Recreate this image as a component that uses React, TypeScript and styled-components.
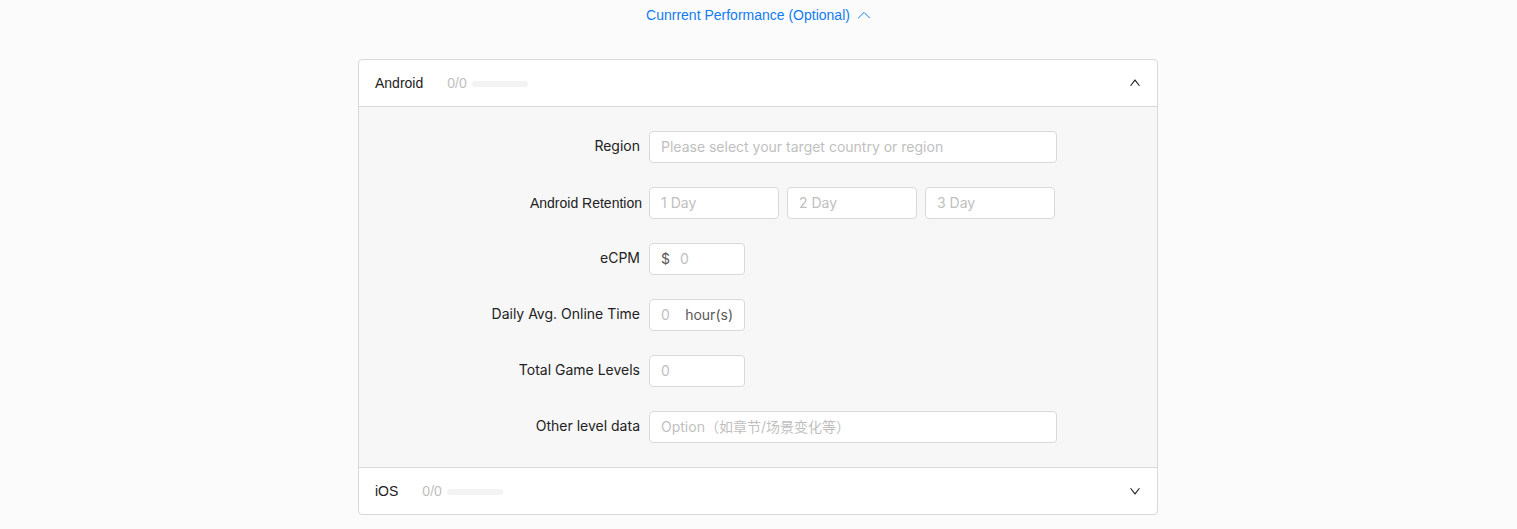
import { useState } from "react";
import styled, { createGlobalStyle } from "styled-components";

const GlobalStyle = createGlobalStyle`
  * {
    box-sizing: border-box;
  }

  body {
    margin: 0;
    background-color: #fbfbfb;
    color: #222;
    font-family: "Liberation Sans", Arial, "Noto Sans CJK SC", sans-serif;
    font-size: 14px;
    line-height: 22px;
  }
`;

const Container = styled.main`
  display: flex;
  flex-direction: column;
  align-items: center;
  gap: 33px;
  padding: 4px 17px 14px 16px;
`;

const SectionToggle = styled.button`
  display: flex;
  align-items: center;
  gap: 8px;
  padding: 0;
  border: none;
  background: none;
  color: #127bf2;
  font: inherit;
  cursor: pointer;
`;

const Collapse = styled.div`
  width: 100%;
  max-width: 800px;
  border: 1px solid #d9d9d9;
  border-radius: 4px;
  background-color: #fff;
  overflow: hidden;
`;

const Panel = styled.section`
  & + & {
    border-top: 1px solid #d9d9d9;
  }
`;

const PanelHeader = styled.button`
  display: flex;
  align-items: center;
  width: 100%;
  padding: 12px 16px;
  border: none;
  background: none;
  color: inherit;
  font: inherit;
  text-align: left;
  cursor: pointer;
`;

const Progress = styled.span`
  display: flex;
  align-items: center;
  gap: 5px;
  flex: 1;
  margin-left: 24px;
  color: #bfbfbf;
`;

const Track = styled.span`
  width: 56px;
  height: 6px;
  margin-top: 2px;
  border-radius: 3px;
  background-color: #f3f3f3;
`;

const Arrow = styled.svg<{ $open: boolean }>`
  flex: none;
  transform: rotate(${(props) => (props.$open ? "-90deg" : "90deg")});
`;

const Chevron = styled.svg<{ $open: boolean }>`
  flex: none;
  transform: ${(props) => (props.$open ? "none" : "rotate(180deg)")};
`;

const Form = styled.form`
  display: flex;
  flex-direction: column;
  gap: 24px;
  padding: 24px 16px;
  border-top: 1px solid #d9d9d9;
  background-color: #f7f7f7;
`;

const Row = styled.div<{ $tight?: boolean }>`
  display: grid;
  grid-template-columns: ${(props) => (props.$tight ? "267px" : "265px")} minmax(0, 408px);
  column-gap: ${(props) => (props.$tight ? "7px" : "9px")};
`;

const Label = styled.label<{ $plain?: boolean }>`
  line-height: ${(props) => (props.$plain ? "32px" : "30px")};
  text-align: right;
  font-family: ${(props) => (props.$plain ? "inherit" : `Inter, "Noto Sans CJK SC", sans-serif`)};
`;

const Days = styled.div`
  display: flex;
  gap: 8px;
`;

const Field = styled.span<{ $width?: string }>`
  display: flex;
  align-items: center;
  gap: 10px;
  width: ${(props) => props.$width || "100%"};
  height: 32px;
  padding: 0 11px;
  border: 1px solid #d9d9d9;
  border-radius: 4px;
  background-color: #fff;
  color: #595959;
  font-family: Inter, "Noto Sans CJK SC", sans-serif;
`;

const Input = styled.input`
  flex: 1;
  min-width: 0;
  width: 100%;
  padding: 0;
  border: none;
  outline: none;
  background: none;
  color: #262626;
  font: inherit;

  &::placeholder {
    color: #bfbfbf;
    opacity: 1;
  }
`;

function ArrowIcon({ open }: { open: boolean }) {
  return (
    <Arrow $open={open} width={12} height={12} viewBox="64 64 896 896" fill="currentColor" aria-hidden="true">
      <path d="M765.7 486.8L314.9 134.7A7.97 7.97 0 00302 141v77.3c0 4.9 2.3 9.6 6.1 12.6l360 281.1-360 281.1c-3.9 3-6.1 7.7-6.1 12.6V883c0 6.7 7.7 10.4 12.9 6.3l450.8-352.1a31.96 31.96 0 000-50.4z" />
    </Arrow>
  );
}

function ChevronIcon({ open }: { open: boolean }) {
  return (
    <Chevron $open={open} width={12} height={12} viewBox="0 0 12 12" fill="none" stroke="currentColor" aria-hidden="true">
      <path d="M0.4 9L6 3.4L11.6 9" strokeLinecap="round" strokeLinejoin="round" />
    </Chevron>
  );
}

function PerformanceForm({ platform }: { platform: string }) {
  const id = platform.toLowerCase();

  return (
    <Form>
      <Row>
        <Label htmlFor={`${id}-region`}>Region</Label>
        <Field>
          <Input id={`${id}-region`} placeholder="Please select your target country or region" />
        </Field>
      </Row>
      <Row $tight>
        <Label htmlFor={`${id}-day-1`} $plain>
          {platform} Retention
        </Label>
        <Days>
          {[1, 2, 3].map((day) => (
            <Field key={day} $width="130px">
              <Input id={`${id}-day-${day}`} aria-label={`Day ${day}`} placeholder={`${day} Day`} />
            </Field>
          ))}
        </Days>
      </Row>
      <Row>
        <Label htmlFor={`${id}-ecpm`}>eCPM</Label>
        <Field $width="96px">
          $
          <Input id={`${id}-ecpm`} placeholder="0" />
        </Field>
      </Row>
      <Row>
        <Label htmlFor={`${id}-time`}>Daily Avg. Online Time</Label>
        <Field $width="96px">
          <Input id={`${id}-time`} placeholder="0" />
          hour(s)
        </Field>
      </Row>
      <Row>
        <Label htmlFor={`${id}-levels`}>Total Game Levels</Label>
        <Field $width="96px">
          <Input id={`${id}-levels`} placeholder="0" />
        </Field>
      </Row>
      <Row>
        <Label htmlFor={`${id}-other`}>Other level data</Label>
        <Field>
          <Input id={`${id}-other`} placeholder="Option（如章节/场景变化等）" />
        </Field>
      </Row>
    </Form>
  );
}

function App() {
  const [visible, setVisible] = useState(true);
  const [active, setActive] = useState("Android");

  return (
    <Container>
      <GlobalStyle />
      <SectionToggle type="button" aria-expanded={visible} onClick={() => setVisible(!visible)}>
        Cunrrent Performance (Optional)
        <ChevronIcon open={visible} />
      </SectionToggle>
      {visible && (
        <Collapse>
          {["Android", "iOS"].map((platform) => {
            const open = active === platform;
            return (
              <Panel key={platform}>
                <PanelHeader type="button" aria-expanded={open} onClick={() => setActive(open ? "" : platform)}>
                  {platform}
                  <Progress>
                    0/0
                    <Track />
                  </Progress>
                  <ArrowIcon open={open} />
                </PanelHeader>
                {open && <PerformanceForm platform={platform} />}
              </Panel>
            );
          })}
        </Collapse>
      )}
    </Container>
  );
}

export default App;
